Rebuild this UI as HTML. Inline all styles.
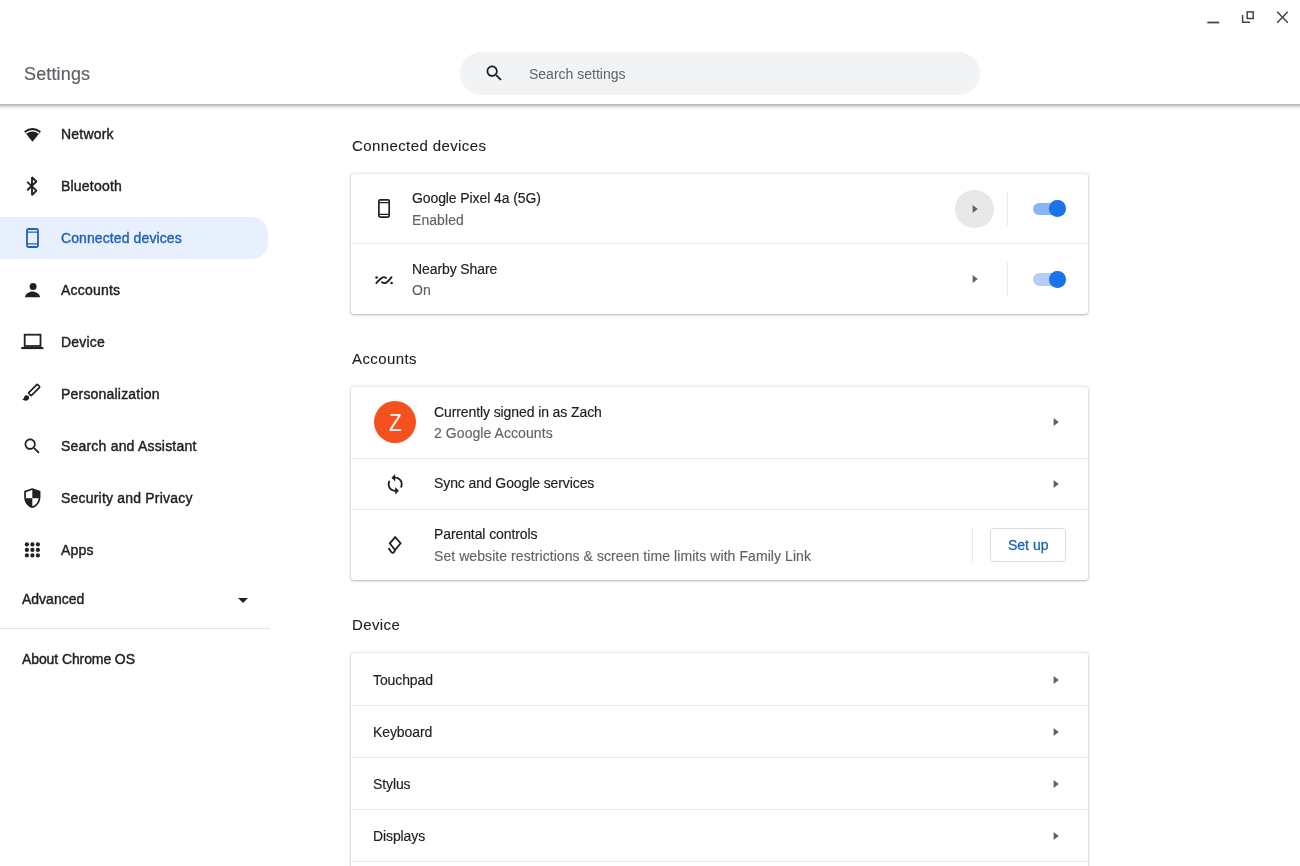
<!DOCTYPE html>
<html><head><meta charset="utf-8">
<style>
*{box-sizing:border-box;margin:0;padding:0}
html,body{width:1300px;height:866px;overflow:hidden;background:#fff}
body{position:relative;font-family:"Liberation Sans",sans-serif;color:#202124}
.abs{position:absolute}
.t{position:absolute;white-space:nowrap;line-height:1;will-change:transform}
svg{position:absolute;display:block}
#hdrshadow{position:absolute;left:0;top:104px;width:1300px;height:7px;background:linear-gradient(#b2b2b2 0,#c6c6c6 1.5px,#dcdcdc 2.5px,#ececec 3.5px,#f6f6f6 4.5px,#fcfcfc 5.5px,#fff 7px)}
.title{font-size:18px;color:#5f6368;left:24px;top:65px;letter-spacing:0.15px;-webkit-text-stroke:0.2px #5f6368}
#search{left:460px;top:52px;width:520px;height:43px;border-radius:22px;background:#f1f3f4}
.sb{font-size:14px;color:#202124;left:60.9px;letter-spacing:0.2px;-webkit-text-stroke:0.4px #202124}
.sel{color:#1f63b6;-webkit-text-stroke:0.4px #1f63b6;letter-spacing:0.1px}
#selbg{left:0;top:216.5px;width:268px;height:42.5px;background:#e8f0fe;border-radius:0 16px 16px 0}
.h2{font-size:15px;color:#202124;-webkit-text-stroke:0.1px #202124;left:352px;letter-spacing:0.4px}
.card{position:absolute;left:351px;width:737px;background:#fff;border-radius:3px;box-shadow:0 1px 2px rgba(60,64,67,.28),0 0 2.5px 0.5px rgba(60,64,67,.13)}
.sep{position:absolute;left:0;width:737px;height:1px;background:#e8eaed}
.p{font-size:14px;color:#202124;-webkit-text-stroke:0.15px #202124;letter-spacing:-0.1px;margin-top:-0.5px}
.s{font-size:14px;color:#5f6368;-webkit-text-stroke:0.15px #5f6368;letter-spacing:0.07px}
.vsep{position:absolute;width:1px;background:#eaeaea}
</style></head><body>
<!-- header -->
<div class="t title">Settings</div>
<div class="abs" id="search"></div>
<div id="hdrshadow"></div>

<!-- sidebar -->
<div class="abs" id="selbg"></div>
<div class="t sb" style="top:127px">Network</div>
<div class="t sb" style="top:179px">Bluetooth</div>
<div class="t sb sel" style="top:231px">Connected devices</div>
<div class="t sb" style="top:283px">Accounts</div>
<div class="t sb" style="top:335px">Device</div>
<div class="t sb" style="top:387px">Personalization</div>
<div class="t sb" style="top:439px">Search and Assistant</div>
<div class="t sb" style="top:491px">Security and Privacy</div>
<div class="t sb" style="top:543px">Apps</div>
<div class="t sb" style="top:592px;left:22px;letter-spacing:0">Advanced</div>
<div class="abs" style="left:0;top:628px;width:270px;height:1px;background:#e6e6e6"></div>
<div class="t sb" style="top:652px;left:22px;letter-spacing:-0.1px">About Chrome OS</div>

<!-- main -->
<div class="t h2" style="top:138px">Connected devices</div>
<div class="card" style="top:174px;height:140px">
  <div class="sep" style="top:69px"></div>
</div>
<div class="t p" style="left:412px;top:191px">Google Pixel 4a (5G)</div>
<div class="t s" style="left:412px;top:213px">Enabled</div>
<div class="t p" style="left:412px;top:262px">Nearby Share</div>
<div class="t s" style="left:412px;top:283px">On</div>

<div class="t h2" style="top:351px">Accounts</div>
<div class="card" style="top:387px;height:193px">
  <div class="sep" style="top:71px"></div>
  <div class="sep" style="top:122px"></div>
</div>
<div class="t p" style="left:434px;top:405px">Currently signed in as Zach</div>
<div class="t s" style="left:434px;top:426px">2 Google Accounts</div>
<div class="t p" style="left:434px;top:476px">Sync and Google services</div>
<div class="t p" style="left:434px;top:527px">Parental controls</div>
<div class="t s" style="left:434px;top:549px">Set website restrictions &amp; screen time limits with Family Link</div>

<div class="t h2" style="top:617px">Device</div>
<div class="card" style="top:653px;height:230px">
  <div class="sep" style="top:52px"></div>
  <div class="sep" style="top:104px"></div>
  <div class="sep" style="top:156px"></div>
  <div class="sep" style="top:208px"></div>
</div>
<div class="t p" style="left:373px;top:673px">Touchpad</div>
<div class="t p" style="left:373px;top:725px">Keyboard</div>
<div class="t p" style="left:373px;top:777px">Stylus</div>
<div class="t p" style="left:373px;top:829px">Displays</div>

<!-- window controls -->
<svg style="left:1200px;top:0" width="100" height="40" viewBox="0 0 100 40">
  <path d="M7.3 22.5H19.2" stroke="#454545" stroke-width="1.8"/>
  <path d="M42.6 15V22.3H50" stroke="#454545" stroke-width="1.5" fill="none"/>
  <rect x="47.2" y="11.9" width="6" height="6.6" stroke="#454545" stroke-width="1.5" fill="none"/>
  <path d="M77.2 11.7L87.8 22.7M87.8 11.7L77.2 22.7" stroke="#454545" stroke-width="1.5"/>
</svg>
<!-- header search icon -->
<svg style="left:484px;top:62.8px" width="20.6" height="20.6" viewBox="0 0 24 24"><path fill="#202124" d="M15.5 14h-.79l-.28-.27C15.41 12.590 16 11.11 16 9.5 16 5.91 13.09 3 9.5 3S3 5.91 3 9.5 5.91 16 9.5 16c1.61 0 3.09-.59 4.230-1.57l.27.28v.79l5 4.99L20.49 19l-4.99-5zm-6 0C7.01 14 5 11.99 5 9.5S7.01 5 9.5 5 14 7.01 14 9.5 11.99 14 9.5 14z"/></svg>
<div class="t" style="left:529px;top:66.5px;font-size:14px;color:#5f6368">Search settings</div>

<!-- sidebar icons -->
<svg style="left:20px;top:122px" width="24" height="24" viewBox="0 0 24 24">
  <path d="M4 9.2Q12.5 2.6 21 9.2L12.5 19.8Z" fill="#202124"/>
  <path d="M6 11.2Q12.5 6.2 19 11.2" stroke="#fff" stroke-width="1.5" fill="none"/>
</svg>
<svg style="left:20px;top:174px" width="24" height="24" viewBox="0 0 24 24">
  <path d="M7.2 7.9L16.4 16.6L12 21V3.2L16.4 7.5L7.2 16.2" stroke="#202124" stroke-width="1.9" fill="none" stroke-linejoin="bevel"/>
</svg>
<svg style="left:20px;top:226px" width="24" height="24" viewBox="0 0 24 24">
  <rect x="7" y="3" width="11" height="18" rx="1.5" stroke="#1f63b6" stroke-width="1.8" fill="none"/>
  <path d="M7 6.2H18M7 17.8H18" stroke="#1f63b6" stroke-width="1.2"/>
</svg>
<svg style="left:20px;top:278px" width="24" height="24" viewBox="0 0 24 24">
  <circle cx="13.1" cy="8.5" r="3.5" fill="#202124"/>
  <path d="M5 19.3C5 15.6 9.5 13.4 12.5 13.4S20 15.6 20 19.3Z" fill="#202124"/>
</svg>
<svg style="left:20px;top:330px" width="24" height="24" viewBox="0 0 24 24">
  <rect x="4.7" y="4.7" width="15.8" height="11.3" stroke="#202124" stroke-width="1.8" fill="none"/>
  <path d="M1.3 17H23.4V19.1H1.3Z" fill="#202124"/>
</svg>
<svg style="left:20px;top:382px" width="24" height="24" viewBox="0 0 24 24">
  <rect x="-6.3" y="-1.9" width="12.6" height="3.8" rx="0.9" transform="translate(14.2 8) rotate(-45)" stroke="#202124" stroke-width="1.7" fill="none"/>
  <path d="M2.2 17.6C3.8 17.3 3.8 15.9 4.4 14.6C5.2 13.2 7.2 12.8 8.4 14C9.6 15.2 9.3 17 8 18C6.6 19.1 3.9 18.9 2.2 17.6Z" fill="#202124"/>
</svg>
<svg style="left:22.1px;top:435.6px" width="20.6" height="20.6" viewBox="0 0 24 24"><path fill="#202124" d="M15.5 14h-.79l-.28-.27C15.41 12.59 16 11.11 16 9.5 16 5.91 13.09 3 9.5 3S3 5.91 3 9.5 5.91 16 9.5 16c1.61 0 3.09-.59 4.23-1.57l.27.28v.79l5 4.99L20.49 19l-4.99-5zm-6 0C7.01 14 5 11.99 5 9.5S7.01 5 9.5 5 14 7.01 14 9.5 11.99 14 9.5 14z"/></svg>
<svg style="left:20px;top:486px" width="24" height="24" viewBox="0 0 24 24">
  <path d="M12.3 3L19.6 5.6V11.3C19.6 15.9 16.6 20 12.3 21.2C8 20 5 15.9 5 11.3V5.6Z" stroke="#202124" stroke-width="1.7" fill="#fff" stroke-linejoin="round"/>
  <path d="M12.3 3L19.6 5.6V12.2H12.3Z" fill="#202124"/>
  <path d="M5 12.2H12.3V21.2C8 20 5 15.9 5 12.2Z" fill="#202124"/>
</svg>
<svg style="left:20px;top:538px" width="24" height="24" viewBox="0 0 24 24">
  <g fill="#202124">
  <circle cx="6.9" cy="6.4" r="2.1"/><circle cx="12.4" cy="6.4" r="2.1"/><circle cx="17.9" cy="6.4" r="2.1"/>
  <circle cx="6.9" cy="11.9" r="2.1"/><circle cx="12.4" cy="11.9" r="2.1"/><circle cx="17.9" cy="11.9" r="2.1"/>
  <circle cx="6.9" cy="17.4" r="2.1"/><circle cx="12.4" cy="17.4" r="2.1"/><circle cx="17.9" cy="17.4" r="2.1"/>
  </g>
</svg>
<svg style="left:231px;top:588px" width="24" height="24" viewBox="0 0 24 24"><path d="M7 10l5 5 5-5z" fill="#202124"/></svg>

<!-- main icons -->
<svg style="left:372px;top:196px" width="24" height="24" viewBox="0 0 24 24">
  <rect x="6.9" y="3.8" width="10.3" height="17.3" rx="1.3" stroke="#202124" stroke-width="1.7" fill="none"/>
  <path d="M6.9 6.6H17.2M6.9 18.4H17.2" stroke="#202124" stroke-width="1.1"/>
</svg>
<svg style="left:372px;top:268px" width="24" height="24" viewBox="0 0 24 24">
  <circle cx="4.6" cy="9.5" r="1.3" fill="#202124"/>
  <circle cx="19.6" cy="15" r="1.3" fill="#202124"/>
  <path d="M4.4 15C6.6 12.8 8.6 10 10.8 9.3C12.2 8.9 13.2 9.4 14 10" stroke="#202124" stroke-width="1.9" fill="none" stroke-linecap="round"/>
  <path d="M10 14.2C11 15 12.1 15.4 13.5 15C15.7 14.3 17.6 11.4 19.6 9.2" stroke="#202124" stroke-width="1.9" fill="none" stroke-linecap="round"/>
</svg>
<div class="abs" style="left:373.7px;top:400.5px;width:42.5px;height:42.5px;border-radius:50%;background:#f4511e"></div>
<div class="t" style="left:373.7px;top:410.5px;width:42.5px;text-align:center;font-size:24px;color:#fff;transform:scaleX(0.87)">Z</div>
<svg style="left:383.8px;top:473.3px" width="22.4" height="22.4" viewBox="0 0 24 24"><path fill="#202124" d="M12 4V1L8 5l4 4V6c3.31 0 6 2.69 6 6 0 1.01-.25 1.97-.7 2.8l1.46 1.46C19.54 15.03 20 13.57 20 12c0-4.42-3.58-8-8-8zm0 14c-3.31 0-6-2.69-6-6 0-1.01.25-1.97.7-2.8L5.24 7.74C4.46 8.97 4 10.430 4 12c0 4.42 3.58 8 8 8v3l4-4-4-4v3z"/></svg>
<svg style="left:374px;top:525px" width="40" height="40" viewBox="0 0 40 40">
  <path d="M21.2 12.2L26.6 18.2L21 25.1L15.8 18.3Z" stroke="#202124" stroke-width="1.8" fill="none" stroke-linejoin="miter"/>
  <path d="M21 25.1C20.5 27 19.5 28 18.3 27.8C17.2 27.6 16.8 26 14.9 23.6" stroke="#202124" stroke-width="1.8" fill="none" stroke-linecap="round"/>
</svg>

<!-- right controls -->
<div class="abs" style="left:955.2px;top:189.7px;width:38.5px;height:38.5px;border-radius:50%;background:#e8e8e9"></div>
<svg style="left:962.5px;top:197px" width="24" height="24" viewBox="0 0 24 24"><path d="M9.6 8L14.8 12L9.6 16Z" fill="#5f6368"/></svg>
<svg style="left:962.5px;top:267.3px" width="24" height="24" viewBox="0 0 24 24"><path d="M9.6 8L14.8 12L9.6 16Z" fill="#5f6368"/></svg>
<svg style="left:1044.2px;top:410.2px" width="24" height="24" viewBox="0 0 24 24"><path d="M9.6 8L14.8 12L9.6 16Z" fill="#5f6368"/></svg>
<svg style="left:1044.2px;top:472px" width="24" height="24" viewBox="0 0 24 24"><path d="M9.6 8L14.8 12L9.6 16Z" fill="#5f6368"/></svg>
<svg style="left:1044.2px;top:668px" width="24" height="24" viewBox="0 0 24 24"><path d="M9.6 8L14.8 12L9.6 16Z" fill="#5f6368"/></svg>
<svg style="left:1044.2px;top:720px" width="24" height="24" viewBox="0 0 24 24"><path d="M9.6 8L14.8 12L9.6 16Z" fill="#5f6368"/></svg>
<svg style="left:1044.2px;top:772px" width="24" height="24" viewBox="0 0 24 24"><path d="M9.6 8L14.8 12L9.6 16Z" fill="#5f6368"/></svg>
<svg style="left:1044.2px;top:824px" width="24" height="24" viewBox="0 0 24 24"><path d="M9.6 8L14.8 12L9.6 16Z" fill="#5f6368"/></svg>

<div class="vsep" style="left:1007px;top:192px;height:34px"></div>
<div class="vsep" style="left:1007px;top:262px;height:34px"></div>
<div class="vsep" style="left:971.5px;top:528px;height:34px"></div>
<div class="abs" style="left:1033px;top:202.5px;width:32px;height:12.5px;border-radius:7px;background:#8ab4f8"></div>
<div class="abs" style="left:1048.9px;top:200.3px;width:17px;height:17px;border-radius:50%;background:#1a73e8;box-shadow:0 0 1px rgba(0,0,0,.25)"></div>
<div class="abs" style="left:1033px;top:273px;width:32px;height:12.5px;border-radius:7px;background:#b3cdf6"></div>
<div class="abs" style="left:1048.9px;top:270.8px;width:17px;height:17px;border-radius:50%;background:#1a73e8;box-shadow:0 0 1px rgba(0,0,0,.25)"></div>
<div class="abs" style="left:989.8px;top:528px;width:76.6px;height:34px;border-radius:4px;border:1px solid #dadce0"></div>
<div class="t" style="left:1008px;top:538px;font-size:14px;color:#1f63b6;-webkit-text-stroke:0.3px #1f63b6">Set up</div>
</body></html>
